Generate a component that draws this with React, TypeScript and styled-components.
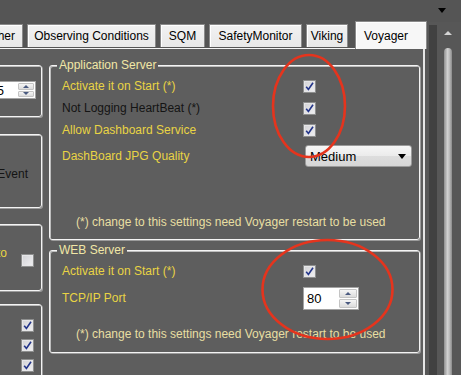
import React from 'react';
import styled, { createGlobalStyle } from 'styled-components';

const GlobalStyle = createGlobalStyle`
  html, body {
    margin: 0;
    padding: 0;
    background: #555555;
  }
  body {
    font-family: "Liberation Sans", Arial, sans-serif;
    font-size: 12px;
  }
`;

const PAGE_BG = '#5e5e5e';

const Screen = styled.div`
  position: relative;
  width: 461px;
  height: 375px;
  overflow: hidden;
  background: #555555;
  display: flex;
  flex-direction: column;
`;

const TopBar = styled.div`
  height: 22px;
  flex: none;
  display: flex;
  justify-content: flex-end;
  align-items: center;
  padding-right: 15px;
`;

const DropArrow = styled.div`
  width: 0;
  height: 0;
  margin-top: -1px;
  border-left: 4px solid transparent;
  border-right: 4px solid transparent;
  border-top: 5px solid #000;
`;

const Body = styled.div`
  flex: 1;
  display: flex;
  min-height: 0;
`;

const Main = styled.div`
  width: 425px;
  flex: none;
  display: flex;
  flex-direction: column;
`;

const TabStrip = styled.div`
  height: 26px;
  flex: none;
  display: flex;
  align-items: flex-end;
  gap: 4px;
  position: relative;
  z-index: 1;
`;

const Tab = styled.div<{ $w: number; $active?: boolean; $offset?: number }>`
  flex: none;
  box-sizing: border-box;
  width: ${p => p.$w}px;
  height: ${p => (p.$active ? 28 : 23)}px;
  margin-bottom: ${p => (p.$active ? -1 : 1)}px;
  margin-left: ${p => (p.$offset ? p.$offset : 0)}px;
  display: flex;
  align-items: center;
  justify-content: ${p => (p.$offset && p.$offset < 0 ? 'flex-end' : 'center')};
  padding: ${p => (p.$active ? '1px 10px 0 0' : '0 7px 0 0')};
  background: ${p => (p.$active ? '#f7f7f7' : 'linear-gradient(#f2f2f2, #e8e8e8)')};
  border: 1px solid #8a8a8a;
  border-bottom: none;
  box-shadow: inset 1px 1px 0 #ffffff;
  color: #000;
  white-space: nowrap;
  font-size: 12px;
`;

const TabLabel = styled.span<{ $pad?: number }>`
  padding-left: ${p => p.$pad ?? 7}px;
`;

const TabPage = styled.div`
  flex: 1;
  background: ${PAGE_BG};
  border-top: 1px solid #f4f4f4;
  border-right: 2px solid #e6e6e6;
  overflow: hidden;
  display: flex;
  gap: 7px;
  padding-top: 16px;
`;

const LeftCol = styled.div`
  flex: none;
  width: 242px;
  margin-left: -200px;
  display: flex;
  flex-direction: column;
`;

const Group = styled.div`
  box-sizing: border-box;
  border: 1px solid #f4f4f4;
  box-shadow: inset 1px 1px 0 #bdbdbd, 1px 1px 0 #9c9c9c;
  border-radius: 3px;
  display: flex;
  flex-direction: column;
`;

const SideBox = styled(Group)<{ $h: number; $mt: number }>`
  height: ${p => p.$h}px;
  margin-top: ${p => p.$mt}px;
  flex: none;
`;

const SideRow = styled.div<{ $pt: number; $pr: number; $gap?: number }>`
  display: flex;
  justify-content: flex-end;
  align-items: flex-start;
  gap: ${p => p.$gap ?? 0}px;
  padding-top: ${p => p.$pt}px;
  padding-right: ${p => p.$pr}px;
`;

const SideChecks = styled.div`
  display: flex;
  flex-direction: column;
  align-items: flex-end;
  gap: 7px;
  padding-top: 14px;
  padding-right: 7px;
`;

const RightCol = styled.div`
  flex: none;
  width: 371px;
  display: flex;
  flex-direction: column;
  gap: 10px;
`;

const Box = styled(Group)<{ $h: number }>`
  height: ${p => p.$h}px;
  flex: none;
  padding: 0 0 0 12px;
`;

const Legend = styled.div`
  align-self: flex-start;
  margin: -8px 0 0 -5px;
  padding: 0 2px;
  line-height: 14px;
  background: ${PAGE_BG};
  color: #f1e7a6;
`;

const Rows = styled.div<{ $pt: number }>`
  display: grid;
  grid-template-columns: 241px auto;
  grid-auto-rows: 22px;
  align-items: center;
  padding-top: ${p => p.$pt}px;
`;

const Label = styled.div<{ $tone?: 'gold' | 'dark' }>`
  color: ${p => (p.$tone === 'dark' ? '#141414' : '#e9d444')};
  white-space: nowrap;
  line-height: 14px;
`;

const Cell = styled.div<{ $mt?: number }>`
  display: flex;
  align-items: center;
  margin-top: ${p => p.$mt ?? 0}px;
`;

const Note = styled.div<{ $pb: number }>`
  margin-top: auto;
  padding: 0 0 ${p => p.$pb}px 14px;
  line-height: 14px;
  color: #e8dea2;
  white-space: nowrap;
`;

const SideText = styled.div<{ $tone?: 'gold' | 'dark' }>`
  line-height: 14px;
  color: ${p => (p.$tone === 'gold' ? '#e9d444' : '#141414')};
  white-space: nowrap;
`;

const CheckBox = styled.div<{ $mt?: number }>`
  box-sizing: border-box;
  width: 13px;
  height: 13px;
  flex: none;
  margin-top: ${p => p.$mt ?? 0}px;
  border: 1px solid #8e8f8f;
  background: linear-gradient(135deg, #d2d2d6, #f0f0f2);
  box-shadow: inset 0 0 0 1px #e6e6e8;
  display: flex;
  align-items: center;
  justify-content: center;
`;

const Combo = styled.div`
  box-sizing: border-box;
  width: 107px;
  height: 22px;
  margin-left: 2px;
  border: 1px solid #9a9a9a;
  border-radius: 3px;
  background: linear-gradient(#f6f6f6 0%, #ebebeb 50%, #dddddd 51%, #d6d6d6 100%);
  display: flex;
  align-items: center;
  justify-content: space-between;
  padding: 0 5px 0 4px;
  color: #000;
  font-size: 13px;
`;

const ComboArrow = styled.div`
  width: 0;
  height: 0;
  border-left: 4px solid transparent;
  border-right: 4px solid transparent;
  border-top: 5px solid #000;
`;

const Spinner = styled.div<{ $w: number; $h: number }>`
  box-sizing: border-box;
  width: ${p => p.$w}px;
  height: ${p => p.$h}px;
  flex: none;
  display: flex;
  border: 1px solid #a3a3a3;
  background: #fff;
`;

const SpinText = styled.div<{ $pr?: number }>`
  flex: 1;
  display: flex;
  align-items: center;
  justify-content: flex-end;
  padding: 0 ${p => p.$pr ?? 2}px 0 2px;
  color: #000;
  font-size: 13px;
`;

const SpinTextLeft = styled(SpinText)`
  justify-content: flex-start;
  padding-left: 3px;
`;

const SpinButtons = styled.div<{ $w: number }>`
  width: ${p => p.$w}px;
  flex: none;
  display: flex;
  flex-direction: column;
  gap: 1px;
  padding: 1px;
  background: #fff;
`;

const SpinButton = styled.div`
  flex: 1;
  display: flex;
  align-items: center;
  justify-content: center;
  border: 1px solid #c4c4c4;
  border-radius: 1px;
  background: linear-gradient(#f5f5f5, #dcdcdc);
`;

const Tri = styled.div<{ $down?: boolean }>`
  width: 0;
  height: 0;
  border-left: 3px solid transparent;
  border-right: 3px solid transparent;
  ${p => (p.$down ? 'border-top: 3px solid #4a5a80;' : 'border-bottom: 3px solid #4a5a80;')}
`;

const Scroll = styled.div`
  flex: 1;
  display: flex;
  padding-left: 4px;
  background: #575757;
`;

const ScrollShade = styled.div`
  width: 8px;
  margin-top: 3px;
  background: #414141;
`;

const ScrollTrack = styled.div`
  width: 9px;
  margin-left: 6px;
  display: flex;
  flex-direction: column;
  align-items: center;
`;

const ScrollUp = styled.div`
  margin-top: 9px;
  width: 0;
  height: 0;
  border-left: 4px solid transparent;
  border-right: 4px solid transparent;
  border-bottom: 4px solid #d4d4d4;
`;

const Thumb = styled.div`
  margin-top: 13px;
  width: 8px;
  flex: 1;
  border-radius: 4px 4px 0 0;
  background: linear-gradient(90deg, #8f8f8f, #d2d2d2 45%, #b8b8b8 70%, #8a8a8a);
`;

const Marks = styled.svg`
  position: absolute;
  left: 0;
  top: 0;
  pointer-events: none;
`;

const Check: React.FC<{ on?: boolean; mt?: number }> = ({ on, mt }) => (
  <CheckBox $mt={mt}>
    {on && (
      <svg width="9" height="9" viewBox="0 0 9 9">
        <path d="M1.2 4.8 L3.4 7.4 L8 0.8" fill="none" stroke="#23358a" strokeWidth="1.6" />
      </svg>
    )}
  </CheckBox>
);

const UpDown: React.FC<{
  value: string;
  w: number;
  h: number;
  bw: number;
  left?: boolean;
  pr?: number;
}> = ({ value, w, h, bw, left, pr }) => (
  <Spinner $w={w} $h={h}>
    {left ? <SpinTextLeft>{value}</SpinTextLeft> : <SpinText $pr={pr}>{value}</SpinText>}
    <SpinButtons $w={bw}>
      <SpinButton>
        <Tri />
      </SpinButton>
      <SpinButton>
        <Tri $down />
      </SpinButton>
    </SpinButtons>
  </Spinner>
);

const tabs = [
  { name: 'Weather', w: 60, offset: -37 },
  { name: 'Observing Conditions', w: 129 },
  { name: 'SQM', w: 45 },
  { name: 'SafetyMonitor', w: 93 },
  { name: 'Viking', w: 42 },
];

const App: React.FC = () => {
  return (
    <Screen>
      <GlobalStyle />
      <TopBar>
        <DropArrow />
      </TopBar>
      <Body>
        <Main>
          <TabStrip>
            {tabs.map(t => (
              <Tab key={t.name} $w={t.w} $offset={t.offset}>
                <TabLabel>{t.name}</TabLabel>
              </Tab>
            ))}
            <Tab $w={72} $active $offset={3}>
              Voyager
            </Tab>
          </TabStrip>
          <TabPage>
            <LeftCol>
              <SideBox $h={52} $mt={0}>
                <SideRow $pt={15} $pr={5}>
                  <UpDown value="5" w={60} h={18} bw={16} pr={13} />
                </SideRow>
              </SideBox>
              <SideBox $h={74} $mt={17}>
                <SideRow $pt={32} $pr={13}>
                  <SideText>Event</SideText>
                </SideRow>
              </SideBox>
              <SideBox $h={67} $mt={16}>
                <SideRow $pt={21} $pr={7} $gap={14}>
                  <SideText $tone="gold">Enable Auto</SideText>
                  <Check mt={8} />
                </SideRow>
              </SideBox>
              <SideBox $h={90} $mt={13}>
                <SideChecks>
                  <Check on />
                  <Check on />
                  <Check on />
                </SideChecks>
              </SideBox>
            </LeftCol>
            <RightCol>
              <Box $h={175}>
                <Legend>Application Server</Legend>
                <Rows $pt={3}>
                  <Label>Activate it on Start (*)</Label>
                  <Cell>
                    <Check on />
                  </Cell>
                  <Label $tone="dark">Not Logging HeartBeat (*)</Label>
                  <Cell>
                    <Check on />
                  </Cell>
                  <Label>Allow Dashboard Service</Label>
                  <Cell>
                    <Check on />
                  </Cell>
                  <Label style={{ marginTop: 8 }}>DashBoard JPG Quality</Label>
                  <Cell $mt={8}>
                    <Combo>
                      <span>Medium</span>
                      <ComboArrow />
                    </Combo>
                  </Cell>
                </Rows>
                <Note $pb={10}>(*) change to this settings need Voyager restart to be used</Note>
              </Box>
              <Box $h={103}>
                <Legend>WEB Server</Legend>
                <Rows $pt={3}>
                  <Label>Activate it on Start (*)</Label>
                  <Cell>
                    <Check on />
                  </Cell>
                  <Label style={{ marginTop: 10 }}>TCP/IP Port</Label>
                  <Cell $mt={10}>
                    <UpDown value="80" w={56} h={23} bw={18} left />
                  </Cell>
                </Rows>
                <Note $pb={11}>(*) change to this settings need Voyager restart to be used</Note>
              </Box>
            </RightCol>
          </TabPage>
        </Main>
        <Scroll>
          <ScrollShade />
          <ScrollTrack>
            <ScrollUp />
            <Thumb />
          </ScrollTrack>
        </Scroll>
      </Body>
      <Marks width="461" height="375" viewBox="0 0 461 375">
        <ellipse cx="309" cy="106" rx="36" ry="51" fill="none" stroke="#e5341d" strokeWidth="2.6" />
        <ellipse cx="327.5" cy="289.5" rx="65" ry="49.5" fill="none" stroke="#e5341d" strokeWidth="2.6" />
      </Marks>
    </Screen>
  );
};

export default App;
